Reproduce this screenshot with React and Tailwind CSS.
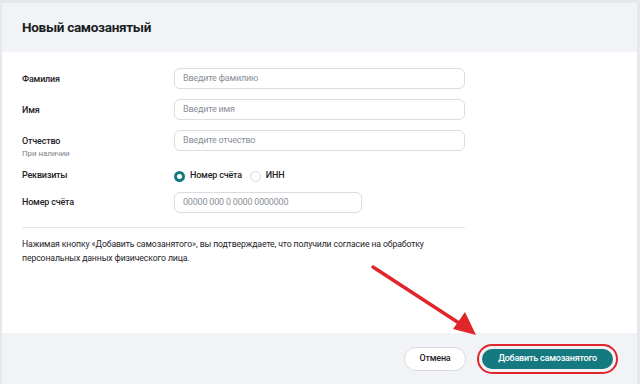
import React from "react";

function Field({ label, sub, placeholder }) {
  return (
    <div className="flex items-start">
      <div className="w-[152px] pt-[5px]">
        <div className="text-[9px] font-medium tracking-[-0.2px] text-[#1f2329] leading-[12px]">{label}</div>
        {sub && <div className="text-[8px] tracking-[-0.1px] text-[#7d838c] leading-[11px] mt-[1px]">{sub}</div>}
      </div>
      <div className="w-[291px] h-[21px] rounded-[6px] border border-[#d9dce1] bg-white flex items-center px-[8px] text-[9px] tracking-[-0.2px] text-[#8a8f98]">
        {placeholder}
      </div>
    </div>
  );
}

export default function App() {
  return (
    <div
      className="w-[640px] h-[384px] bg-[#e6e8eb] overflow-hidden relative"
      style={{ fontFamily: "Roboto, 'Noto Sans', sans-serif" }}
    >
      <div className="absolute left-[2px] right-[3px] top-[3px] bottom-0 bg-white flex flex-col">
        <div className="h-[49px] bg-[#f1f3f6] flex items-center px-[20px]">
          <div className="text-[13.5px] font-bold tracking-[-0.3px] text-[#1a1d21]">Новый самозанятый</div>
        </div>
        <div className="flex-1 px-[20px] pt-[16px]">
          <div className="flex flex-col gap-[10px]">
            <Field label="Фамилия" placeholder="Введите фамилию" />
            <Field label="Имя" placeholder="Введите имя" />
            <Field label="Отчество" sub="При наличии" placeholder="Введите отчество" />
          </div>
          <div className="flex items-center mt-[9px] h-[16px]">
            <div className="w-[152px] text-[9px] font-medium tracking-[-0.2px] text-[#1f2329]">Реквизиты</div>
            <div className="flex items-center">
              <span className="w-[11px] h-[11px] rounded-full border-[3px] border-[#157a80] bg-white"></span>
              <span className="ml-[5px] text-[9px] font-medium tracking-[-0.2px] text-[#1f2329]">Номер счёта</span>
              <span className="ml-[8px] w-[11px] h-[11px] rounded-full border border-[#d5d8dd] bg-white"></span>
              <span className="ml-[5px] text-[9px] font-medium tracking-[-0.2px] text-[#1f2329]">ИНН</span>
            </div>
          </div>
          <div className="mt-[8px]">
            <div className="flex items-center">
              <div className="w-[152px] text-[9px] font-medium tracking-[-0.2px] text-[#1f2329]">Номер счёта</div>
              <div className="w-[188px] h-[21px] rounded-[6px] border border-[#d9dce1] bg-white flex items-center px-[8px] text-[9px] tracking-[-0.2px] text-[#8a8f98]">
                00000 000 0 0000 0000000
              </div>
            </div>
          </div>
          <div className="mt-[14px] w-[443px] border-t border-[#e3e5e8]"></div>
          <div className="mt-[9px] text-[8.7px] tracking-[-0.12px] leading-[14px] text-[#1f2329]">
            Нажимая кнопку «Добавить самозанятого», вы подтверждаете, что получили согласие на обработку
            <br />
            персональных данных физического лица.
          </div>
        </div>
        <div className="h-[51px] bg-[#f1f3f6] flex items-center justify-end pr-[19px] gap-[11px]">
          <div className="h-[24px] w-[62px] rounded-full border border-[#d9dce1] bg-white flex items-center justify-center text-[9px] font-medium tracking-[-0.2px] text-[#1f2329]">
            Отмена
          </div>
          <div className="rounded-full border-[2.5px] border-[#e0262b] p-[3px]">
            <div className="h-[20px] w-[131px] rounded-full bg-[#157a80] flex items-center justify-center text-[9px] font-medium tracking-[-0.2px] text-white">
              Добавить самозанятого
            </div>
          </div>
        </div>
      </div>
      <svg className="absolute left-0 top-0" width="640" height="384" viewBox="0 0 640 384">
        <line x1="373" y1="267" x2="462" y2="325" stroke="#e0262b" strokeWidth="3.5" strokeLinecap="round" />
        <polygon points="476,335 453,329 465,312" fill="#e0262b" />
      </svg>
    </div>
  );
}
